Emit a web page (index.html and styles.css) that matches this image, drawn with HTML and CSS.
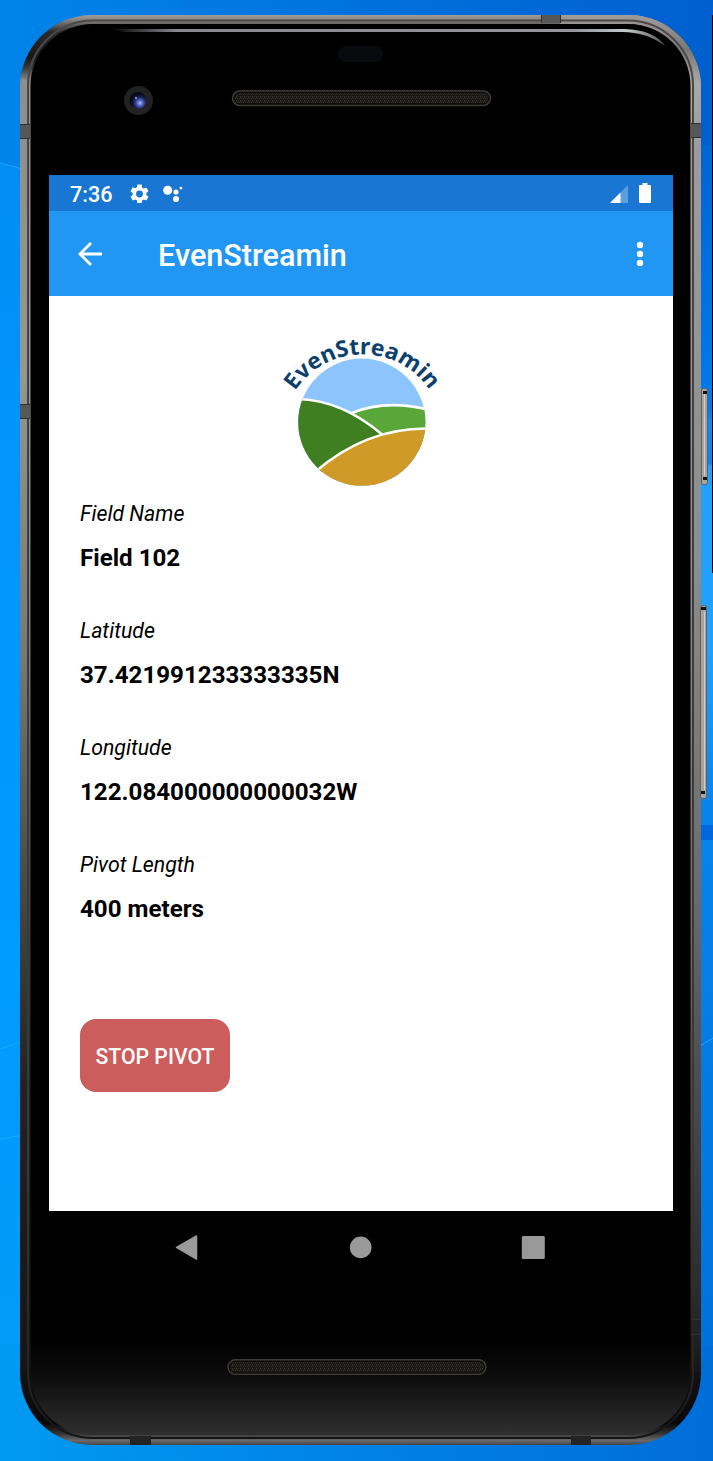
FILE: index.html
```html
<!DOCTYPE html>
<html lang="en">
<head>
<meta charset="utf-8">
<title>EvenStreamin</title>
<link rel="stylesheet" href="styles.css">
</head>
<body>
<div class="desktop">
  <svg class="wallpaper" viewBox="0 0 713 1461" aria-hidden="true">
    <defs>
      <linearGradient id="sky" x1="0" y1="0" x2="1" y2="0"><stop offset="0" stop-color="#0084ea"/><stop offset=".5" stop-color="#0072dd"/><stop offset="1" stop-color="#005fcf"/></linearGradient>
      <linearGradient id="leftSide" x1="0" y1="0" x2="0" y2="1"><stop offset="0" stop-color="#018cf3"/><stop offset=".2" stop-color="#0294fb"/><stop offset=".6" stop-color="#009bff"/><stop offset="1" stop-color="#009cf4"/></linearGradient>
      <linearGradient id="rightSide" x1="0" y1="0" x2="0" y2="1"><stop offset="0" stop-color="#0064d4"/><stop offset=".22" stop-color="#007bea"/><stop offset=".23" stop-color="#0a8cfb"/><stop offset=".265" stop-color="#0883f4"/><stop offset=".268" stop-color="#20a1ff"/><stop offset=".42" stop-color="#20a1ff"/><stop offset=".55" stop-color="#0784ec"/><stop offset="1" stop-color="#0071da"/></linearGradient>
      <linearGradient id="floor" x1="0" y1="0" x2="1" y2="0"><stop offset="0" stop-color="#009af2"/><stop offset=".4" stop-color="#0087e7"/><stop offset="1" stop-color="#006dd7"/></linearGradient>
    </defs>
    <path fill="url(#sky)" d="M0 0h713v165H0z"/>
    <path fill="url(#leftSide)" d="M0 163l60 20v1278H0z"/>
    <path fill="url(#rightSide)" d="M670 145h43v1200h-43z"/>
    <path fill="url(#floor)" d="M0 1345h713v116H0z"/>
    <path fill="#0068dc" d="M690 825h23v15h-23z"/>
    <path fill="none" stroke="#16a9ff" d="M0 163l30 8M0 1049l30-10M0 1139l30-5M700 1046l13-8"/>
    <path fill="#000" d="M712 15h1v558h-1z"/>
  </svg>

  <main class="phone">
    <svg class="chassis" viewBox="0 0 713 1461" aria-hidden="true">
      <defs>
        <linearGradient id="metal" x1="0" y1="15" x2="0" y2="1445" gradientUnits="userSpaceOnUse"><stop offset="0" stop-color="#a09c9b"/><stop offset=".003" stop-color="#8a8786"/><stop offset=".012" stop-color="#2a2a2a"/><stop offset=".03" stop-color="#171717"/><stop offset=".037" stop-color="#3a3a3a"/><stop offset=".046" stop-color="#8f8e8e"/><stop offset=".25" stop-color="#969595"/><stop offset=".45" stop-color="#777"/><stop offset=".6" stop-color="#4b4b4b"/><stop offset=".75" stop-color="#222"/><stop offset=".94" stop-color="#151515"/><stop offset=".985" stop-color="#080808"/><stop offset=".992" stop-color="#333"/><stop offset=".997" stop-color="#6b6969"/><stop offset="1" stop-color="#444"/></linearGradient>
        <linearGradient id="metalRight" x1="0" y1="15" x2="0" y2="1375" gradientUnits="userSpaceOnUse"><stop offset="0" stop-color="#a09c9b"/><stop offset=".025" stop-color="#7b7977"/><stop offset=".05" stop-color="#aaa8a6"/><stop offset=".1" stop-color="#9d9b9b"/><stop offset=".4" stop-color="#8d8d8d"/><stop offset=".65" stop-color="#6a6a6a"/><stop offset=".95" stop-color="#292929"/><stop offset="1" stop-color="#151515"/></linearGradient>
        <linearGradient id="rim" x1="0" y1="15" x2="0" y2="1445" gradientUnits="userSpaceOnUse"><stop offset="0" stop-color="#4a4848"/><stop offset=".4" stop-color="#3e3d3d"/><stop offset=".8" stop-color="#383838"/><stop offset=".96" stop-color="#222"/><stop offset="1" stop-color="#111"/></linearGradient>
        <linearGradient id="glass" x1="0" y1="1340" x2="0" y2="1437" gradientUnits="userSpaceOnUse"><stop offset="0" stop-color="#000"/><stop offset=".35" stop-color="#0b0b0b"/><stop offset="1" stop-color="#303030"/></linearGradient>
        <linearGradient id="sheen" x1="110" y1="0" x2="665" y2="0" gradientUnits="userSpaceOnUse"><stop offset="0" stop-color="#000"/><stop offset=".12" stop-color="#86888c"/><stop offset=".84" stop-color="#94969b"/><stop offset=".93" stop-color="#c3caca"/><stop offset="1" stop-color="#535858"/></linearGradient>
        <linearGradient id="edge" x1="0" y1="0" x2="1" y2="0"><stop offset="0" stop-color="#000"/><stop offset=".55" stop-color="#1e1e1e"/><stop offset="1" stop-color="#000"/></linearGradient>
        <pattern id="mesh" width="4" height="4" patternUnits="userSpaceOnUse"><path fill="#171613" d="M0 0h4v4H0z"/><path fill="#34312c" d="M0 0h1v1H0zM2 0h1v1H2zM1 2h1v1H1zM3 2h1v1H3zM0 1h1v1H0z"/></pattern>
        <radialGradient id="lens" cx=".62" cy=".65" r=".55"><stop offset="0" stop-color="#aebdff"/><stop offset=".3" stop-color="#5265bd"/><stop offset=".65" stop-color="#182051"/><stop offset="1" stop-color="#070813"/></radialGradient>
      </defs>
      <rect x="20" y="15" width="681" height="1430" rx="72" fill="url(#metal)"/>
      <path fill="url(#metalRight)" d="M560 15H629A72 72 0 0 1 701 87V1372H690V87A62 62 0 0 0 628 24H560z"/>
      <rect x="28" y="20.500" width="665" height="1417.500" rx="65" fill="none" stroke="url(#rim)" stroke-width="2"/>
      <rect x="30.500" y="24" width="660" height="1411" rx="62" fill="url(#glass)"/>
      <path fill="url(#edge)" d="M32 95h10v1245H32zM679 95h10v1245h-10z"/>
      <path fill="url(#sheen)" d="M110 29H625Q654 30 665 46Q647 32 622 32H125z"/>
      <path fill="#585757" d="M20 124h10v15H20zM20 404h10v15H20zM691 123h10v15h-10zM541 15h20v8h-20z"/>
      <path fill="#232323" d="M691 1320h10v14h-10zM130 1436h21v9h-21zM571 1436h20v9h-20z"/>
      <path stroke="#303030" d="M20 124.500h10M20 138.500h10M20 404.500h10M20 418.500h10M691 123.500h10M691 137.500h10M541.500 15v8M560.500 15v8M691 1319.500h10M691 1334.500h10"/>
      <g stroke="#625f5d"><rect x="701.500" y="388.500" width="6" height="96" rx="2" fill="#a6a3a0"/><rect x="700.500" y="605.500" width="6" height="193" rx="2" fill="#a6a3a0"/></g>
      <path stroke="#d0cdca" d="M704.500 394v82M704.500 612v178"/>
      <path fill="#151515" d="M703 391h4v3h-4zM703 477h4v3h-4zM701 607h5v3h-5zM701 791h4v3h-4z"/>
      <rect x="338" y="46" width="45" height="16" rx="8" fill="#090a0e"/>
      <g fill="url(#mesh)" stroke="#3c3a37" stroke-width="1.500"><rect x="232.500" y="91" width="258" height="14.500" rx="7.200"/><rect x="228" y="1359.800" width="258" height="14.500" rx="7.200"/></g>
      <g fill="none" stroke="#090909"><rect x="234" y="92.500" width="255" height="11.500" rx="5.700"/><rect x="229.500" y="1361.300" width="255" height="11.500" rx="5.700"/></g>
      <circle cx="138.500" cy="100.500" r="14.500" fill="#222223"/>
      <circle cx="138" cy="100.500" r="8.500" fill="url(#lens)"/>
      <circle cx="136" cy="98" r="1.200" fill="#7083d8"/>
    </svg>

    <section class="screen">
      <div class="status">
        <span class="time">7:36</span>
        <svg class="gear" viewBox="2 2 20 20"><path fill="#fff" d="M19.140 12.940c.04-.3.060-.61.060-.94s-.02-.64-.07-.94l2.030-1.580c.18-.14.230-.41.120-.61l-1.920-3.320c-.12-.22-.37-.29-.59-.22l-2.390.96c-.5-.38-1.030-.7-1.620-.94l-.36-2.540A.5.5 0 0 0 13.920 2h-3.840a.5.5 0 0 0-.48.410l-.36 2.540c-.59.240-1.130.57-1.620.94l-2.390-.96c-.22-.08-.47 0-.59.220L2.730 8.870c-.12.210-.08.470.12.610l2.030 1.580c-.05.300-.08.630-.08.940s.02.640.07.940l-2.020 1.580c-.18.140-.23.410-.12.610l1.920 3.320c.12.220.37.290.59.220l2.390-.96c.5.380 1.030.700 1.620.940l.36 2.540c.05.240.24.410.48.410h3.840c.24 0 .44-.17.470-.41l.36-2.540c.59-.24 1.130-.56 1.620-.94l2.390.96c.22.080.47 0 .59-.22l1.920-3.320c.12-.22.070-.47-.12-.61zM12 15.600a3.600 3.600 0 1 1 0-7.200 3.600 3.600 0 0 1 0 7.200z"/></svg>
        <svg class="assistant" viewBox="0 0 20 18"><g fill="#fff"><circle cx="4.700" cy="5.200" r="4.500"/><circle cx="13" cy="7" r="2.600"/><circle cx="13" cy="14" r="3"/><circle cx="17.900" cy="3.100" r="1.400"/></g></svg>
        <svg class="signal" viewBox="0 0 18 18"><path fill="#fff" opacity=".3" d="M18 0v18H0z"/><path fill="#fff" d="M10.500 7.500V18H0z"/></svg>
        <svg class="battery" viewBox="0 0 12 20"><path fill="#fff" d="M3.500 0h5v2H11q1 0 1 1v16q0 1-1 1H1q-1 0-1-1V3q0-1 1-1h2.500z"/></svg>
      </div>

      <header class="appbar">
        <svg class="back" viewBox="0 0 24 24"><path fill="none" stroke="#fff" stroke-width="2.800" d="M24 12H2M13 1L2 12l11 11"/></svg>
        <h1 class="title">EvenStreamin</h1>
        <svg class="more" viewBox="0 0 8 26"><g fill="#fff"><circle cx="4" cy="4" r="3.200"/><circle cx="4" cy="13" r="3.200"/><circle cx="4" cy="22" r="3.200"/></g></svg>
      </header>

      <div class="content">
        <svg class="logo" viewBox="269 325 184 165">
          <defs>
            <clipPath id="disc"><circle cx="361.800" cy="422.200" r="63.600"/></clipPath>
            <path id="arc" d="M295 391A80.500 80.500 0 0 1 430 391"/>
          </defs>
          <g clip-path="url(#disc)">
            <path fill="#8cc5fe" d="M295 355h135v135H295z"/>
            <path fill="#59a639" d="M352 413Q386 399 430 410V450H352z"/>
            <path fill="#3f7f22" d="M290 398Q338 397 382 434L318 475H290z"/>
            <path fill="#d09a27" d="M317 471Q367 427 430 428.500V490H310z"/>
            <path fill="none" stroke="#fff" stroke-width="2.600" d="M290 399Q338 397 381.500 434M352 413Q386 399 430 410M315 472Q367 427 430 428.500"/>
          </g>
          <text class="logo-text"><textPath href="#arc" textLength="159" lengthAdjust="spacingAndGlyphs">EvenStreamin</textPath></text>
        </svg>

        <dl class="fields">
          <div class="field"><dt>Field Name</dt><dd>Field 102</dd></div>
          <div class="field"><dt>Latitude</dt><dd>37.421991233333335N</dd></div>
          <div class="field"><dt>Longitude</dt><dd>122.084000000000032W</dd></div>
          <div class="field"><dt>Pivot Length</dt><dd>400 meters</dd></div>
        </dl>

        <button class="stop">STOP PIVOT</button>
      </div>
    </section>

    <nav class="nav">
      <svg class="nav-icon" viewBox="0 0 26 26"><path fill="#999" stroke="#999" stroke-width="1.500" stroke-linejoin="round" d="M2.500 13.300L22.500 2v23z"/></svg>
      <svg class="nav-icon" viewBox="0 0 26 26"><circle cx="13.700" cy="13.400" r="10.800" fill="#999"/></svg>
      <svg class="nav-icon" viewBox="0 0 26 26"><rect x="1.800" y="2" width="23" height="23" rx="1.500" fill="#999"/></svg>
    </nav>
  </main>
</div>
</body>
</html>
```
FILE: styles.css
```css
* { box-sizing: border-box; }

body {
  margin: 0;
  font-family: Roboto, sans-serif;
  color: #000;
}

.desktop {
  position: relative;
  width: 713px;
  height: 1461px;
  overflow: hidden;
  background: #0088ef;
}

.wallpaper,
.chassis {
  position: absolute;
  inset: 0;
  width: 713px;
  height: 1461px;
}

.phone {
  display: flex;
  flex-direction: column;
  height: 100%;
  padding: 175px 40px 178px 49px;
}

.screen {
  position: relative;
  display: flex;
  flex-direction: column;
  height: 1036px;
  background: #fff;
}

.status {
  display: flex;
  align-items: center;
  height: 36px;
  padding: 1px 22px 0 21px;
  background: #1976d2;
  color: #fff;
}

.time {
  width: 60px;
  padding-top: 2px;
  font-size: 21.6px;
  font-weight: 500;
  line-height: 24px;
}

.gear { width: 19px; height: 20px; }
.assistant { width: 20px; height: 18px; margin-left: 14px; }
.signal { width: 18px; height: 18px; margin: 0 11px 0 auto; }
.battery { width: 12px; height: 20px; margin-bottom: 1px; }

.appbar {
  display: flex;
  align-items: center;
  height: 85px;
  padding: 0 29px;
  background: #2196f3;
  color: #fff;
}

.back { width: 24px; height: 24px; }

.title {
  flex: 1;
  margin: 0;
  padding: 4px 0 0 56px;
  font-size: 30.6px;
  font-weight: 500;
  line-height: 36px;
}

.more { width: 8px; height: 26px; }

.content {
  display: flex;
  flex-direction: column;
  align-items: flex-start;
  padding: 29px 31px 0;
}

.logo {
  align-self: center;
  width: 184px;
  height: 165px;
}

.logo-text {
  font-family: "Noto Sans", sans-serif;
  font-size: 22.5px;
  font-weight: 700;
  fill: #0d406b;
}

.fields {
  display: grid;
  gap: 44px;
  margin: 9px 0 0;
}

.field {
  display: grid;
  gap: 15px;
  height: 73px;
}

dt {
  font-size: 21.3px;
  font-style: italic;
  line-height: 29px;
}

dd {
  margin: 0;
  font-size: 24.15px;
  font-weight: 700;
  line-height: 30px;
}

.stop {
  width: 150px;
  height: 73px;
  margin-top: 96px;
  padding: 2px 0 0;
  border: 0;
  border-radius: 16px;
  background: #cd5c5c;
  color: #fff;
  font: 500 21.2px/26px Roboto, sans-serif;
  white-space: nowrap;
}

.nav {
  position: relative;
  display: flex;
  justify-content: space-between;
  align-items: center;
  height: 72px;
  padding: 0 127px 0 125px;
}

.nav-icon { width: 26px; height: 26px; }
```
